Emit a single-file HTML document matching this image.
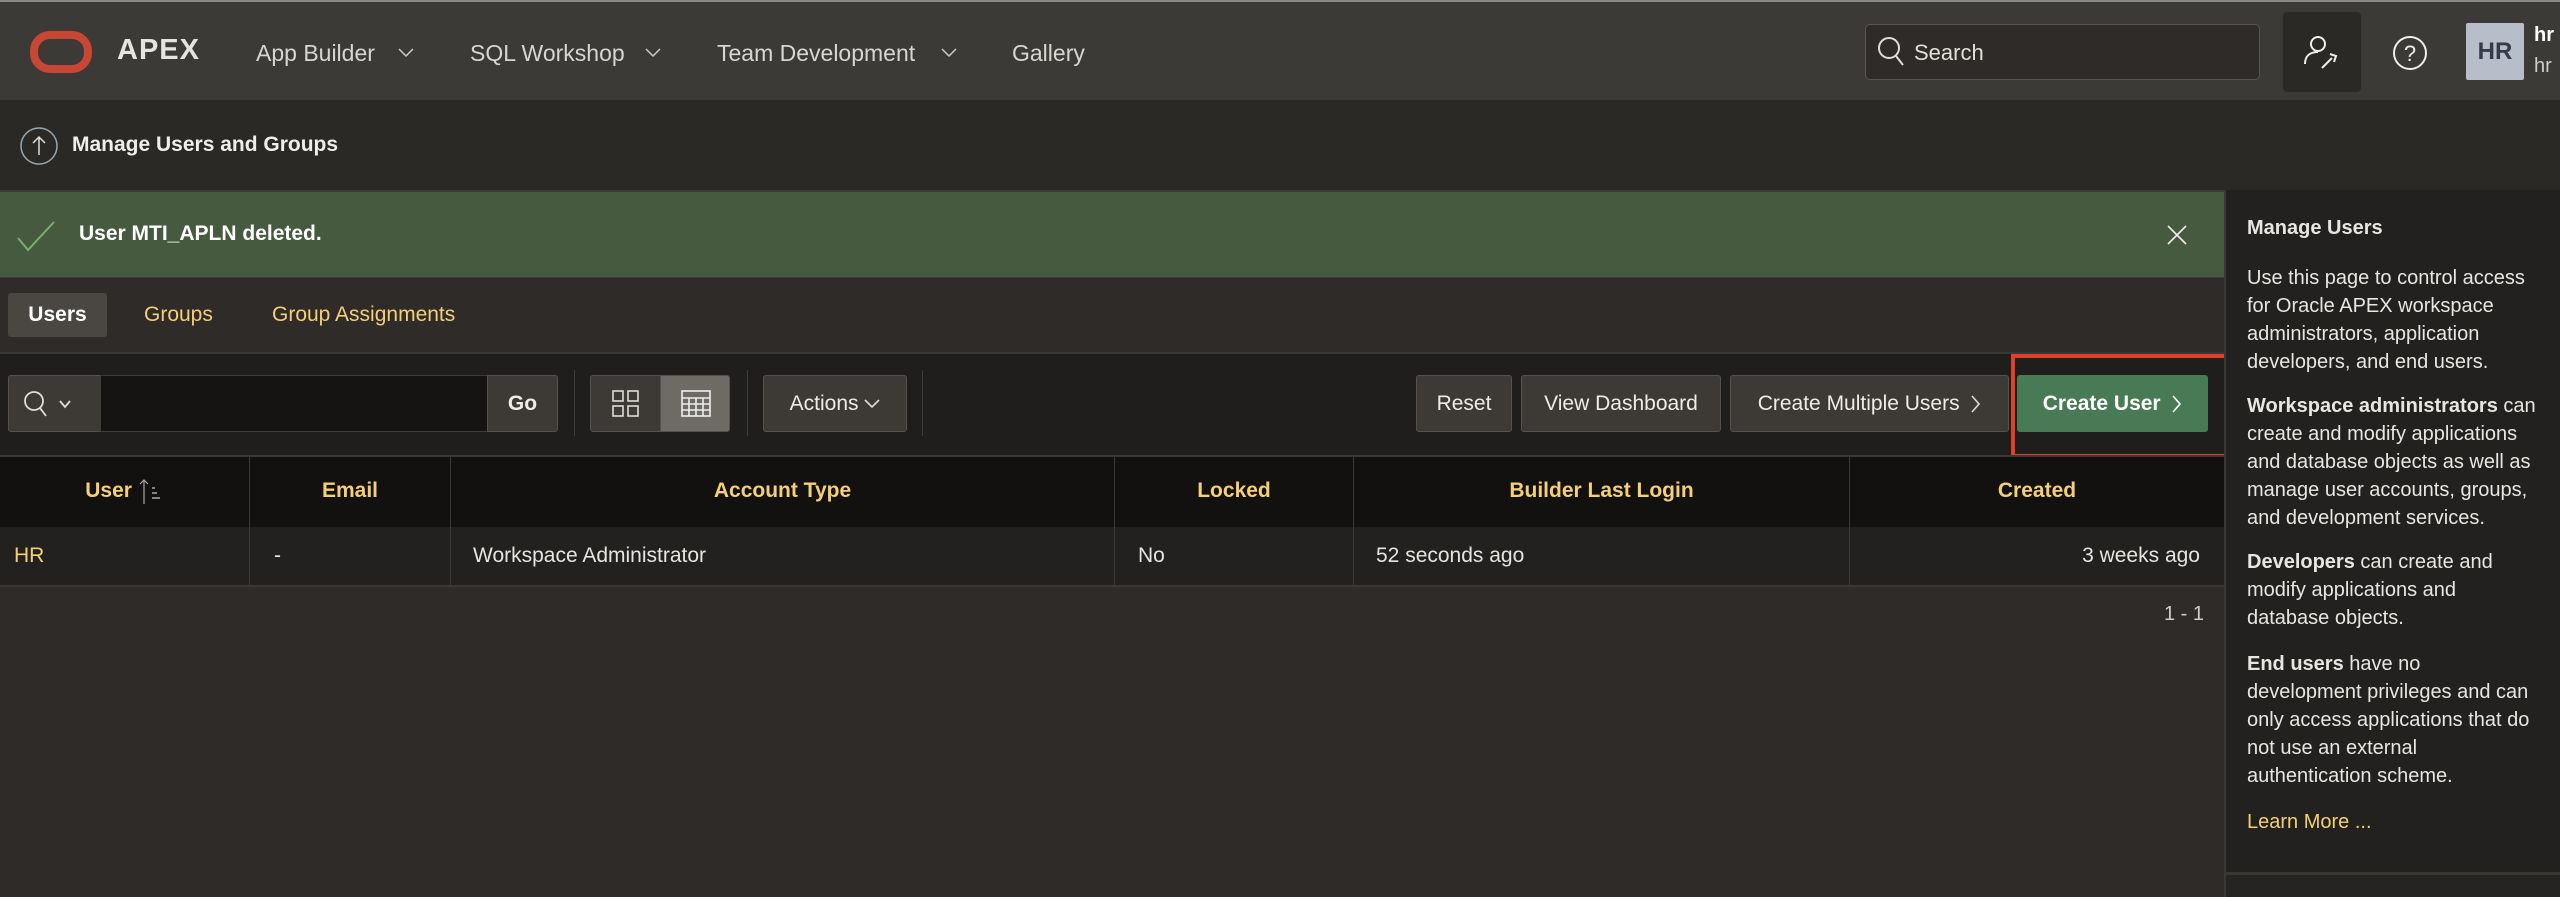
<!DOCTYPE html>
<html><head><meta charset="utf-8"><style>
*{box-sizing:border-box;margin:0;padding:0}
body{width:2560px;height:897px;overflow:hidden;background:#2e2b28;font-family:"Liberation Sans",sans-serif;color:#f0efed;position:relative}
.a{position:absolute;white-space:nowrap}
.nav{font-size:23px;color:#d8d6d2;top:40px}
.btn{position:absolute;background:#3d3a36;border:1px solid #55524d;border-radius:3px;color:#eeece8;font-size:21px;display:flex;align-items:center;justify-content:center}
.th{position:absolute;top:455px;height:72px;display:flex;align-items:center;justify-content:center;color:#f4cf76;font-weight:bold;font-size:21px;border-right:1px solid #3a3835}
.td{position:absolute;top:527px;height:58px;display:flex;align-items:center;font-size:21px;color:#e6e4e0;border-right:1px solid #3a3835}
.rp{font-size:20px;line-height:28px;color:#e8e6e2}
.rp p{margin-bottom:16px}
</style></head><body>
<!-- header -->
<div class="a" style="left:0;top:0;width:2560px;height:100px;background:#3c3a36;border-top:2px solid #8a8884"></div>
<div class="a" style="left:30px;top:31px;width:62px;height:42px;border:8px solid #c74634;border-radius:20px"></div>
<div class="a" style="left:117px;top:34px;font-size:29px;font-weight:bold;color:#e6e4e0;letter-spacing:1px">APEX</div>
<div class="a nav" style="left:256px">App Builder</div>
<svg class="a" style="left:398px;top:48px" width="16" height="10"><path d="M1 1l7 7 7-7" stroke="#ccc" fill="none" stroke-width="1.5"/></svg>
<div class="a nav" style="left:470px">SQL Workshop</div>
<svg class="a" style="left:645px;top:48px" width="16" height="10"><path d="M1 1l7 7 7-7" stroke="#ccc" fill="none" stroke-width="1.5"/></svg>
<div class="a nav" style="left:717px">Team Development</div>
<svg class="a" style="left:941px;top:48px" width="16" height="10"><path d="M1 1l7 7 7-7" stroke="#ccc" fill="none" stroke-width="1.5"/></svg>
<div class="a nav" style="left:1012px">Gallery</div>
<div class="a" style="left:1865px;top:24px;width:395px;height:56px;background:#2e2b28;border:1px solid #5a5752;border-radius:5px"></div>
<svg class="a" style="left:1877px;top:36px" width="30" height="32"><circle cx="12" cy="12" r="10" stroke="#ddd" stroke-width="2" fill="none"/><path d="M19 20l7 9" stroke="#ddd" stroke-width="2"/></svg>
<div class="a" style="left:1914px;top:40px;font-size:22px;color:#e0ded9">Search</div>
<div class="a" style="left:2283px;top:12px;width:78px;height:80px;background:#2b2926;border-radius:4px"></div>
<svg class="a" style="left:2302px;top:34px" width="40" height="38"><circle cx="16" cy="10" r="7" stroke="#eee" stroke-width="2" fill="none"/><path d="M3 30c0-9 6-12 13-12M20 34l10-10M28 20l6 2-2 6" stroke="#eee" stroke-width="2" fill="none"/></svg>
<svg class="a" style="left:2391px;top:34px" width="38" height="38"><circle cx="19" cy="19" r="16" stroke="#eee" stroke-width="2" fill="none"/><text x="19" y="27" font-size="22" fill="#eee" text-anchor="middle" font-family="Liberation Sans">?</text></svg>
<div class="a" style="left:2466px;top:23px;width:58px;height:57px;background:#b7bec9;border-radius:2px;color:#333a48;font-size:24px;font-weight:bold;display:flex;align-items:center;justify-content:center">HR</div>
<div class="a" style="left:2534px;top:24px;font-size:20px;font-weight:bold;color:#fff">hr</div>
<div class="a" style="left:2534px;top:55px;font-size:20px;color:#cfcdc9">hr</div>
<!-- breadcrumb -->
<div class="a" style="left:0;top:100px;width:2560px;height:90px;background:#2b2926"></div>
<svg class="a" style="left:19px;top:126px" width="40" height="40"><circle cx="20" cy="20" r="18" stroke="#9aa6ae" stroke-width="1.5" fill="none"/><path d="M20 29V11M14 17l6-6 6 6" stroke="#ddd" stroke-width="1.5" fill="none"/></svg>
<div class="a" style="left:72px;top:133px;font-size:21px;font-weight:bold;color:#efeeeb">Manage Users and Groups</div>
<!-- alert -->
<div class="a" style="left:0;top:190px;width:2224px;height:87px;background:#465a40;border-top:2px solid #3e3c38"></div>
<svg class="a" style="left:16px;top:220px" width="42" height="32"><path d="M2 18l10 12L38 2" stroke="#7cae73" stroke-width="2" fill="none"/></svg>
<div class="a" style="left:79px;top:222px;font-size:21px;font-weight:bold;color:#fff">User MTI_APLN deleted.</div>
<svg class="a" style="left:2167px;top:225px" width="20" height="20"><path d="M1 1l18 18M19 1L1 19" stroke="#eee" stroke-width="1.6"/></svg>
<!-- tabs -->
<div class="a" style="left:0;top:277px;width:2224px;height:75px;background:#2e2b28;border-top:1px solid #3e3c38"></div>
<div class="a" style="left:8px;top:293px;width:99px;height:44px;background:#4a4642;border-radius:3px;color:#fff;font-weight:bold;font-size:21px;display:flex;align-items:center;justify-content:center">Users</div>
<div class="a" style="left:144px;top:303px;font-size:21px;color:#f4cf76">Groups</div>
<div class="a" style="left:272px;top:303px;font-size:21px;color:#f4cf76">Group Assignments</div>
<!-- toolbar -->
<div class="a" style="left:0;top:352px;width:2224px;height:103px;background:#1f1e1c;border-top:2px solid #3a3835"></div>
<div class="btn" style="left:8px;top:375px;width:93px;height:57px;border-radius:3px 0 0 3px"></div>
<svg class="a" style="left:22px;top:390px" width="50" height="30"><circle cx="12" cy="11" r="9" stroke="#ddd" stroke-width="1.8" fill="none"/><path d="M18 18l6 8M38 11l5 6 5-6" stroke="#ddd" stroke-width="1.8" fill="none"/></svg>
<div class="a" style="left:100px;top:375px;width:388px;height:57px;background:#151412;border:1px solid #3e3c38"></div>
<div class="btn" style="left:487px;top:375px;width:71px;height:57px;font-weight:bold;border-radius:0 3px 3px 0">Go</div>
<div class="a" style="left:574px;top:370px;width:1px;height:66px;background:#3f3d39"></div>
<div class="btn" style="left:590px;top:375px;width:71px;height:57px;border-radius:3px 0 0 3px"></div>
<svg class="a" style="left:612px;top:390px" width="28" height="28"><g stroke="#ddd" stroke-width="1.6" fill="none"><rect x="1" y="1" width="10" height="10"/><rect x="16" y="1" width="10" height="10"/><rect x="1" y="16" width="10" height="10"/><rect x="16" y="16" width="10" height="10"/></g></svg>
<div class="btn" style="left:660px;top:375px;width:70px;height:57px;background:#6e6a64;border-radius:0 3px 3px 0"></div>
<svg class="a" style="left:681px;top:390px" width="30" height="28"><g stroke="#eee" stroke-width="1.6" fill="none"><rect x="1" y="1" width="28" height="25"/><path d="M1 8h28M1 14h28M1 20h28M8 8v18M15 8v18M22 8v18"/></g></svg>
<div class="a" style="left:747px;top:370px;width:1px;height:66px;background:#3f3d39"></div>
<div class="btn" style="left:763px;top:375px;width:144px;height:57px">Actions&nbsp;<svg width="16" height="10"><path d="M1 1l7 7 7-7" stroke="#ddd" fill="none" stroke-width="1.6"/></svg></div>
<div class="a" style="left:922px;top:370px;width:1px;height:66px;background:#3f3d39"></div>
<div class="btn" style="left:1416px;top:375px;width:96px;height:57px">Reset</div>
<div class="btn" style="left:1521px;top:375px;width:200px;height:57px">View Dashboard</div>
<div class="btn" style="left:1730px;top:375px;width:279px;height:57px">Create Multiple Users&nbsp;&nbsp;<svg width="10" height="18"><path d="M1 1l7 8-7 8" stroke="#ddd" fill="none" stroke-width="1.6"/></svg></div>
<div class="btn" style="left:2017px;top:375px;width:191px;height:57px;background:#487a55;border-color:#487a55;font-weight:bold;color:#fff">Create User&nbsp;&nbsp;<svg width="10" height="18"><path d="M1 1l7 8-7 8" stroke="#fff" fill="none" stroke-width="1.6"/></svg></div>
<div class="a" style="left:2011px;top:354px;width:217px;height:104px;border:4px solid #e0402a"></div>
<!-- table -->
<div class="a" style="left:0;top:455px;width:2224px;height:72px;background:#121110;border-top:2px solid #3a3835"></div>
<div class="a" style="left:0;top:527px;width:2224px;height:60px;background:#222120;border-bottom:2px solid #3a3835"></div>
<div class="th" style="left:0;width:250px">User&nbsp;<svg width="26" height="26"><path d="M6 2v24M2 6l4-4 4 4" stroke="#aaa" fill="none" stroke-width="1.2"/><path d="M14 10h3M14 15h5M14 20h8" stroke="#aaa" stroke-width="1.4"/></svg></div>
<div class="th" style="left:250px;width:201px">Email</div>
<div class="th" style="left:451px;width:664px">Account Type</div>
<div class="th" style="left:1115px;width:239px">Locked</div>
<div class="th" style="left:1354px;width:496px">Builder Last Login</div>
<div class="th" style="left:1850px;width:374px;border-right:0">Created</div>
<div class="td" style="left:0;width:250px;padding-left:14px;color:#f4cf76">HR</div>
<div class="td" style="left:250px;width:201px;padding-left:24px">-</div>
<div class="td" style="left:451px;width:664px;padding-left:22px">Workspace Administrator</div>
<div class="td" style="left:1115px;width:239px;padding-left:23px">No</div>
<div class="td" style="left:1354px;width:496px;padding-left:22px">52 seconds ago</div>
<div class="td" style="left:1850px;width:374px;justify-content:flex-end;padding-right:24px;border-right:0">3 weeks ago</div>
<div class="a" style="left:2164px;top:603px;font-size:20px;color:#cfcdc9">1 - 1</div>
<!-- right panel -->
<div class="a" style="left:2224px;top:190px;width:336px;height:685px;background:#222120;border-left:2px solid #3a3835;border-bottom:3px solid #3a3835"></div>
<div class="a" style="left:2224px;top:875px;width:336px;height:22px;background:#252422;border-left:2px solid #3a3835"></div>
<div class="a rp" style="left:2247px;top:214px;font-weight:bold">Manage Users</div>
<div class="a rp" style="left:2247px;top:264px">
<p>Use this page to control access<br>for Oracle APEX workspace<br>administrators, application<br>developers, and end users.</p>
<p><b>Workspace administrators</b> can<br>create and modify applications<br>and database objects as well as<br>manage user accounts, groups,<br>and development services.</p>
<p style="margin-bottom:18px"><b>Developers</b> can create and<br>modify applications and<br>database objects.</p>
<p style="margin-bottom:18px"><b>End users</b> have no<br>development privileges and can<br>only access applications that do<br>not use an external<br>authentication scheme.</p>
<p style="color:#f4cf76">Learn More ...</p>
</div>
</body></html>
